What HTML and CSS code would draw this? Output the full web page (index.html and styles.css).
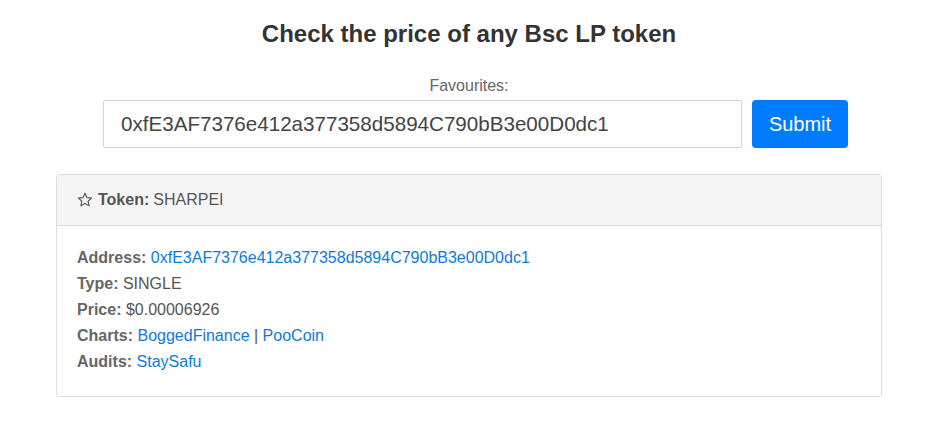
FILE: index.html
```html
<!DOCTYPE html>
<html>
<head>
<meta charset="utf-8">
<link rel="stylesheet" href="styles.css">
</head>
<body>
<div class="container">
  <h1 class="title">Check the price of any Bsc LP token</h1>
  <div class="fav">Favourites:</div>
  <form class="search">
    <input class="addr-input" type="text" value="0xfE3AF7376e412a377358d5894C790bB3e00D0dc1">
    <button class="submit" type="button">Submit</button>
  </form>
  <div class="card">
    <div class="card-header">
      <svg class="star" viewBox="0 0 16 16" width="16" height="16"><path d="M8 1.3 L9.95 5.6 L14.6 6.1 L11.1 9.25 L12.1 13.9 L8 11.5 L3.9 13.9 L4.9 9.25 L1.4 6.1 L6.05 5.6 Z" fill="none" stroke="#555" stroke-width="1.1" stroke-linejoin="round"/></svg>
      <b>Token:</b> SHARPEI
    </div>
    <div class="card-body">
      <div class="row"><b>Address:</b> <a href="#">0xfE3AF7376e412a377358d5894C790bB3e00D0dc1</a></div>
      <div class="row"><b>Type:</b> SINGLE</div>
      <div class="row"><b>Price:</b> $0.00006926</div>
      <div class="row"><b>Charts:</b> <a href="#">BoggedFinance</a> | <a href="#">PooCoin</a></div>
      <div class="row"><b>Audits:</b> <a href="#">StaySafu</a></div>
    </div>
  </div>
</div>
</body>
</html>
```

FILE: styles.css
```css
html, body {
  margin: 0;
  padding: 0;
  background: #fff;
}
body {
  font-family: "Liberation Sans", Arial, sans-serif;
  color: #555;
  font-size: 16px;
}
.container {
  width: 826px;
  margin-left: 56px;
  padding-top: 19px;
}
.title {
  margin: 0;
  text-align: center;
  font-size: 24px;
  line-height: 29px;
  font-weight: bold;
  color: #333;
}
.fav {
  margin-top: 29px;
  text-align: center;
  line-height: 18px;
  color: #666;
}
.search {
  display: flex;
  gap: 10px;
  margin: 5px 0 0 47px;
}
.addr-input {
  box-sizing: border-box;
  width: 639px;
  height: 48px;
  border: 1px solid #ced4da;
  border-radius: 2px;
  padding: 0 17px;
  font-family: "Liberation Sans", Arial, sans-serif;
  font-size: 20.6px;
  color: #444;
  outline: none;
}
.submit {
  box-sizing: border-box;
  width: 96px;
  height: 48px;
  border: none;
  border-radius: 4px;
  background: #007bff;
  color: #fff;
  font-family: "Liberation Sans", Arial, sans-serif;
  font-size: 20px;
  padding: 0;
}
.card {
  margin-top: 26px;
  border: 1px solid #ddd;
  border-radius: 3px;
}
.card-header {
  height: 51px;
  box-sizing: border-box;
  background: #f5f5f5;
  border-bottom: 1px solid #ddd;
  padding: 0 20px;
  display: flex;
  align-items: center;
  gap: 4px;
  color: #555;
}
.card-header b {
  color: #555;
}
.star {
  display: block;
  margin-right: 1px;
}
.card-body {
  padding: 19px 20px 21px;
}
.row {
  line-height: 26px;
  color: #555;
}
.row b {
  color: #666;
}
a {
  color: #0d7bdc;
  text-decoration: none;
}
```
